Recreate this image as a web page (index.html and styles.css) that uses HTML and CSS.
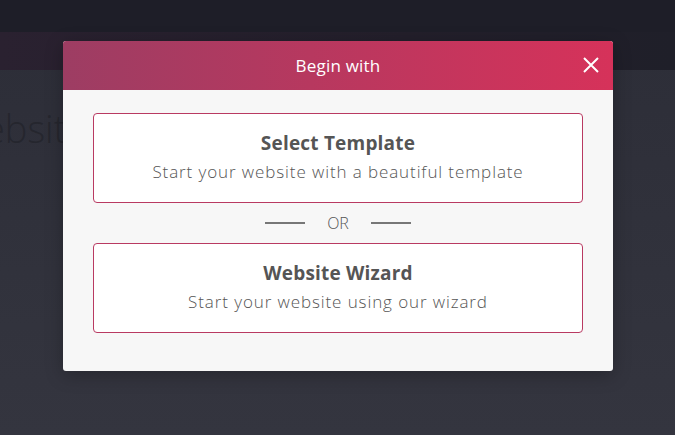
FILE: index.html
```html
<!DOCTYPE html>
<html lang="en">
<head>
  <meta charset="UTF-8" />
  <meta name="viewport" content="width=device-width, initial-scale=1.0"/>
  <title>Begin with</title>
  <link rel="stylesheet" href="styles.css">
</head>
<body>

  <div class="topbar"></div>
  <div class="subbar"></div>
  <div class="page">
    <h1 class="page-title">Website</h1>
  </div>

  <div class="overlay">
    <div class="modal">
      <div class="modal-head">
        <span class="modal-title">Begin with</span>
        <button class="close" aria-label="Close">
          <svg width="16" height="16" viewBox="0 0 16 16">
            <path d="M1 1 L15 15 M15 1 L1 15" stroke="#fff" stroke-width="2" fill="none"/>
          </svg>
        </button>
      </div>
      <div class="modal-body">
        <a class="choice" href="#">
          <h3>Select Template</h3>
          <p>Start your website with a beautiful template</p>
        </a>
        <div class="or"><span class="line"></span>OR<span class="line"></span></div>
        <a class="choice" href="#">
          <h3>Website Wizard</h3>
          <p>Start your website using our wizard</p>
        </a>
      </div>
    </div>
  </div>

</body>
</html>
```

FILE: styles.css
```css
body {
  margin: 0;
  font-family: "Open Sans", Lato, sans-serif;
  background: linear-gradient(180deg, #2c2d37 0%, #34353f 100%);
  height: 435px;
  overflow: hidden;
}

.topbar {
  height: 32px;
  background: #1e1e28;
}

.subbar {
  height: 38px;
  background: linear-gradient(90deg, #2a2130 0%, #231f2b 60%, #1f1f29 100%);
}

.page {
  padding: 32px 0 0;
  overflow: hidden;
}

.page-title {
  margin: 0 0 0 -50px;
  font-size: 38px;
  font-weight: 300;
  color: #25262e;
  white-space: nowrap;
}

.overlay {
  position: absolute;
  left: 63px;
  top: 41px;
}

.modal {
  width: 550px;
  background: #f7f7f7;
  border-radius: 3px;
  overflow: hidden;
  box-shadow: 0 4px 18px rgba(0,0,0,0.25);
}

.modal-head {
  position: relative;
  height: 49px;
  display: flex;
  align-items: center;
  justify-content: center;
  background: linear-gradient(90deg, #9d3d63 0%, #b7385f 45%, #d6325a 100%);
}

.modal-title {
  color: #fff;
  font-size: 17px;
  letter-spacing: 0.2px;
}

.close {
  position: absolute;
  right: 14px;
  top: 16px;
  padding: 0;
  border: 0;
  background: none;
  line-height: 0;
  cursor: pointer;
}

.modal-body {
  padding: 23px 30px 38px;
}

.choice {
  display: block;
  height: 90px;
  box-sizing: border-box;
  padding-top: 16px;
  background: #fff;
  border: 1px solid #b93a62;
  border-radius: 4px;
  text-align: center;
  text-decoration: none;
}

.choice h3 {
  margin: 0;
  font-size: 19px;
  font-weight: 700;
  color: #555;
  letter-spacing: 0.2px;
}

.choice p {
  margin: 4px 0 0;
  font-size: 17px;
  font-weight: 300;
  color: #555;
  letter-spacing: 0.9px;
}

.or {
  height: 40px;
  display: flex;
  align-items: center;
  justify-content: center;
  gap: 22px;
  font-size: 16px;
  font-weight: 300;
  color: #555;
}

.or .line {
  width: 40px;
  height: 2px;
  background: #777;
}
```
